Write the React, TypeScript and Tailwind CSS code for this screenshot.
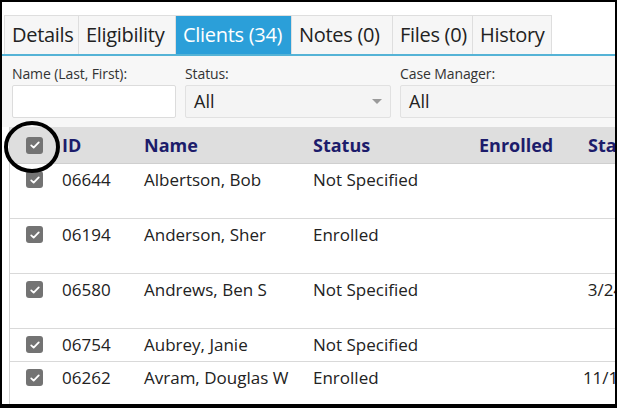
import React from 'react'

const TABS = [
  { label: 'Details', w: 'w-[75px]' },
  { label: 'Eligibility', w: 'w-[97px]' },
  { label: 'Clients (34)', w: 'w-[116px]', active: true },
  { label: 'Notes (0)', w: 'w-[101px]' },
  { label: 'Files (0)', w: 'w-[80px]' },
  { label: 'History', w: 'w-[79px]' },
]

const CLIENTS = [
  { id: '06644', name: 'Albertson, Bob', status: 'Not Specified', start: '', h: 'h-[55px]' },
  { id: '06194', name: 'Anderson, Sher', status: 'Enrolled', start: '', h: 'h-[55px]' },
  { id: '06580', name: 'Andrews, Ben S', status: 'Not Specified', start: '3/24/2020', h: 'h-[55px]' },
  { id: '06754', name: 'Aubrey, Janie', status: 'Not Specified', start: '', h: 'h-[33px]' },
  { id: '06262', name: 'Avram, Douglas W', status: 'Enrolled', start: '11/14/2019', h: 'h-[55px]' },
]

const COLS = 'grid grid-cols-[52px_82px_169px_166px_89px_120px]'

function Check() {
  return (
    <span className="flex items-center justify-center w-[17px] h-[17px] rounded-[3px] bg-[#737373]">
      <svg viewBox="0 0 16 16" className="w-[12px] h-[12px]">
        <path d="M3 8.5l3.2 3L13 4.5" fill="none" stroke="#fff" strokeWidth="2.4" strokeLinecap="round" strokeLinejoin="round" />
      </svg>
    </span>
  )
}

function Combo({ value, className }: { value: string; className: string }) {
  return (
    <div className={`h-[33px] flex items-center justify-between pl-[8px] pr-[8px] bg-[#f4f4f4] border border-[#e1e1e1] rounded-[2px] ${className}`}>
      <span className="text-[18px] text-[#222]">{value}</span>
      <span className="w-0 h-0 border-l-[5px] border-r-[5px] border-t-[5px] border-l-transparent border-r-transparent border-t-[#9a9a9a]" />
    </div>
  )
}

export default function App() {
  return (
    <div className="w-[617px] h-[408px] bg-black pt-[2px] pl-[2px] pr-[2px] pb-[4px]" style={{ fontFamily: '"Open Sans", "Noto Sans", sans-serif' }}>
      <div className="relative w-full h-full bg-white overflow-hidden">
        {/* tab strip */}
        <div className="pt-[13px] pl-[2px] flex border-b-[2px] border-[#55b3d6]">
          {TABS.map(t => (
            <div key={t.label}
              className={`${t.w} h-[39px] flex items-center pl-[7px] text-[20px] tracking-[-0.3px] border-t border-r border-[#dedede] first:border-l ${t.active ? 'bg-[#2b9fd9] text-white border-[#2b9fd9]' : 'bg-[#f6f6f6] text-[#222]'}`}>
              {t.label}
            </div>
          ))}
        </div>

        {/* filters */}
        <div className="bg-[#f7f7f7] pl-[10px] pt-[9px] pb-[9px] flex gap-[9px]">
          <div className="flex flex-col w-[164px] shrink-0">
            <span className="text-[14px] tracking-[-0.1px] text-[#333] leading-[18px] mb-[2px]">Name (Last, First):</span>
            <div className="h-[33px] bg-white border border-[#dcdcdc] rounded-[2px]" />
          </div>
          <div className="flex flex-col w-[206px] shrink-0">
            <span className="text-[14px] tracking-[-0.1px] text-[#333] leading-[18px] mb-[2px]">Status:</span>
            <Combo value="All" className="w-full" />
          </div>
          <div className="flex flex-col w-[240px] shrink-0">
            <span className="text-[14px] tracking-[-0.1px] text-[#333] leading-[18px] mb-[2px]">Case Manager:</span>
            <Combo value="All" className="w-full" />
          </div>
        </div>

        {/* client grid */}
        <div className="ml-[7px] border-l border-[#d4d4d4]">
          <div className={`${COLS} h-[37px] items-center bg-[#dedede] border-b border-[#cfcfcf] text-[18px] font-bold text-[#1c1c6b] w-[700px]`}>
            <div className="pl-[16px]"><Check /></div>
            <div>ID</div>
            <div>Name</div>
            <div>Status</div>
            <div>Enrolled</div>
            <div className="pl-[20px]">Start Date</div>
          </div>
          {CLIENTS.map(c => (
            <div key={c.id} className={`${COLS} ${c.h} items-start border-b border-[#d9d9d9] text-[17px] text-[#222] w-[700px]`}>
              <div className="pl-[16px] pt-[7px]"><Check /></div>
              <div className="pt-[3px]">{c.id}</div>
              <div className="pt-[3px]">{c.name}</div>
              <div className="pt-[3px]">{c.status}</div>
              <div />
              <div className="pt-[3px] text-center">{c.start}</div>
            </div>
          ))}
        </div>

        {/* annotation ring around the select-all box */}
        <svg className="absolute left-0 top-[118px] w-[64px] h-[56px] pointer-events-none" viewBox="0 0 64 56">
          <ellipse cx="30" cy="27" rx="26" ry="24" fill="none" stroke="#000" strokeWidth="4" />
        </svg>
      </div>
    </div>
  )
}
